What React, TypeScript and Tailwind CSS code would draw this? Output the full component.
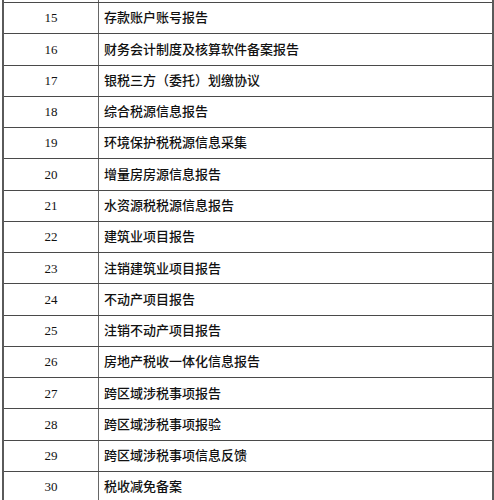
const rows = [
  { no: 15, name: "存款账户账号报告" },
  { no: 16, name: "财务会计制度及核算软件备案报告" },
  { no: 17, name: "银税三方（委托）划缴协议" },
  { no: 18, name: "综合税源信息报告" },
  { no: 19, name: "环境保护税税源信息采集" },
  { no: 20, name: "增量房房源信息报告" },
  { no: 21, name: "水资源税税源信息报告" },
  { no: 22, name: "建筑业项目报告" },
  { no: 23, name: "注销建筑业项目报告" },
  { no: 24, name: "不动产项目报告" },
  { no: 25, name: "注销不动产项目报告" },
  { no: 26, name: "房地产税收一体化信息报告" },
  { no: 27, name: "跨区域涉税事项报告" },
  { no: 28, name: "跨区域涉税事项报验" },
  { no: 29, name: "跨区域涉税事项信息反馈" },
  { no: 30, name: "税收减免备案" },
];

export default function App() {
  return (
    <div
      className="w-[494px] h-[500px] overflow-hidden bg-white text-[#111]"
      style={{ fontFamily: '"Liberation Serif", "Noto Sans CJK SC", serif' }}
    >
      <div className="ml-[2px] w-[492px] border-x-2 border-[#5a5a5a]">
        <div className="flex h-[2px]">
          <div className="w-[95px] border-r border-[#666]" />
        </div>
        {rows.map((row) => (
          <div
            key={row.no}
            className="flex h-[31.27px] border-t border-[#4a4a4a] box-border"
          >
            <div className="w-[95px] shrink-0 border-r border-[#666] flex items-center justify-center text-[13px] font-medium">
              {row.no}
            </div>
            <div className="flex-1 flex items-center pl-[5px] text-[13px] font-medium">
              {row.name}
            </div>
          </div>
        ))}
      </div>
    </div>
  );
}
